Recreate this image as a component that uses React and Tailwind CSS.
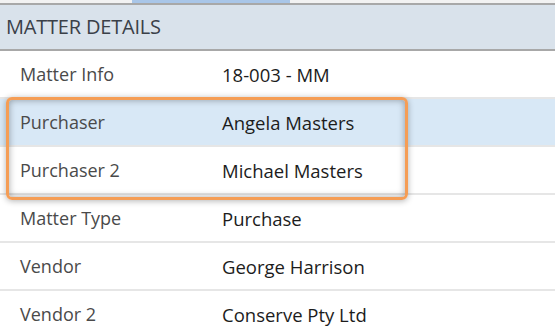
import React from "react";

const rows = [
  { label: "Matter Info", value: "18-003 - MM" },
  { label: "Purchaser", value: "Angela Masters", selected: true },
  { label: "Purchaser 2", value: "Michael Masters" },
  { label: "Matter Type", value: "Purchase" },
  { label: "Vendor", value: "George Harrison" },
  { label: "Vendor 2", value: "Conserve Pty Ltd" },
];

const App = () => {
  return (
    <div
      className="w-[555px] h-[328px] overflow-hidden bg-white relative"
      style={{ fontFamily: '"Open Sans", "Noto Sans", sans-serif' }}
    >
      {/* Tab strip */}
      <div className="h-[3px] bg-[#f2f2f2] flex">
        <div className="ml-[132px] w-[158px] bg-[#a9c6e8]" />
      </div>

      {/* Section header */}
      <div className="h-[48px] bg-[#d9e2eb] border-t-2 border-b-2 border-[#a8a8a8] flex items-center pl-[6px]">
        <span className="text-[20px] text-[#3a4048] tracking-[-0.2px]">MATTER DETAILS</span>
      </div>

      {/* Rows */}
      {rows.map((row) => (
        <div
          key={row.label}
          className={`h-[48px] border-b-2 border-[#e6e6e6] flex items-center ${
            row.selected ? "bg-[#d8e8f6]" : "bg-white"
          }`}
        >
          <span className="w-[222px] pl-[20px] text-[18px] text-[#4a4a4a]">{row.label}</span>
          <span className="text-[18.5px] text-[#1c1c1c] pt-[2px]">{row.value}</span>
        </div>
      ))}

      {/* Highlight box */}
      <div className="absolute left-[6px] top-[97px] w-[402px] h-[103px] rounded-[6px] border-[3px] border-[#f59d55] shadow-[0_1px_6px_rgba(0,0,0,0.3),inset_0_0_7px_rgba(0,0,0,0.35)]" />
    </div>
  );
};

export default App;
